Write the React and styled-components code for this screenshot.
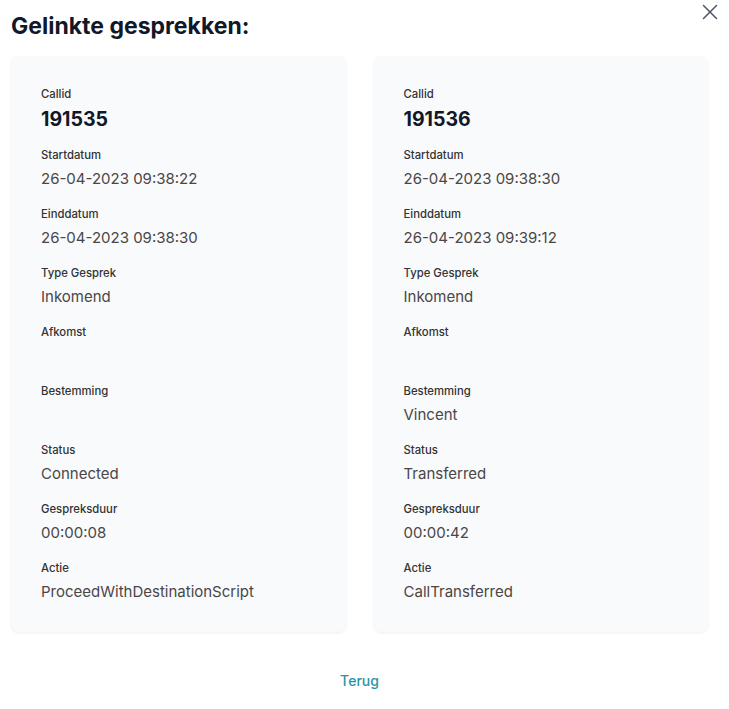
import React from 'react';
import styled, { createGlobalStyle } from 'styled-components';

const GlobalStyle = createGlobalStyle`
  body {
    margin: 0;
    background: #ffffff;
    font-family: Inter, "Noto Sans", "Liberation Sans", sans-serif;
  }
`;

const Dialog = styled.div`
  width: 729px;
  box-sizing: border-box;
  padding: 12px 21px 0 11px;
`;

const Header = styled.div`
  display: flex;
  justify-content: space-between;
  align-items: flex-start;
`;

const Title = styled.h2`
  margin: 0;
  font-size: 23px;
  line-height: 28px;
  font-weight: 700;
  color: #111827;
`;

const CloseButton = styled.button`
  display: flex;
  margin: -12px -14px 0 0;
  padding: 0;
  border: 0;
  background: none;
  color: #4b5563;
  cursor: pointer;
`;

const Cards = styled.div`
  display: grid;
  grid-template-columns: 1fr 1fr;
  gap: 28px;
  margin-top: 16px;
`;

const Card = styled.div`
  background: #f9fafb;
  border-radius: 8px;
  box-shadow: 0 1px 3px rgba(0, 0, 0, 0.07);
  padding: 30px 30px 28px;
  display: flex;
  flex-direction: column;
  gap: 15px;
`;

const Field = styled.div`
  display: flex;
  flex-direction: column;
  gap: 4px;
`;

const Label = styled.span`
  font-size: 11.3px;
  line-height: 16px;
  font-weight: 500;
  color: #333333;
`;

const Value = styled.span`
  font-size: ${(p) => (p.$big ? '19.5px' : '15px')};
  line-height: ${(p) => (p.$big ? '26px' : '24px')};
  font-weight: ${(p) => (p.$big ? 700 : 400)};
  color: ${(p) => (p.$big ? '#111827' : '#4a4646')};
  min-height: ${(p) => (p.$big ? '26px' : '24px')};
`;

const Footer = styled.div`
  display: flex;
  justify-content: center;
  margin-top: 39px;
`;

const BackLink = styled.button`
  border: 0;
  background: none;
  padding: 0;
  font-family: inherit;
  font-size: 14px;
  line-height: 20px;
  font-weight: 500;
  color: #2b93ab;
  cursor: pointer;
`;

const calls = [
  {
    callid: '191535',
    start: '26-04-2023 09:38:22',
    end: '26-04-2023 09:38:30',
    type: 'Inkomend',
    origin: '',
    destination: '',
    status: 'Connected',
    duration: '00:00:08',
    action: 'ProceedWithDestinationScript',
  },
  {
    callid: '191536',
    start: '26-04-2023 09:38:30',
    end: '26-04-2023 09:39:12',
    type: 'Inkomend',
    origin: '',
    destination: 'Vincent',
    status: 'Transferred',
    duration: '00:00:42',
    action: 'CallTransferred',
  },
];

const fields = [
  ['Startdatum', 'start'],
  ['Einddatum', 'end'],
  ['Type Gesprek', 'type'],
  ['Afkomst', 'origin'],
  ['Bestemming', 'destination'],
  ['Status', 'status'],
  ['Gespreksduur', 'duration'],
  ['Actie', 'action'],
];

function CallCard({ call }) {
  return (
    <Card>
      <Field>
        <Label>Callid</Label>
        <Value $big>{call.callid}</Value>
      </Field>
      {fields.map(([label, key]) => (
        <Field key={key}>
          <Label>{label}</Label>
          <Value>{call[key]}</Value>
        </Field>
      ))}
    </Card>
  );
}

export default function App() {
  return (
    <>
      <GlobalStyle />
      <Dialog>
        <Header>
          <Title>Gelinkte gesprekken:</Title>
          <CloseButton aria-label="Sluiten">
            <svg width="24" height="24" viewBox="0 0 24 24" fill="none" stroke="currentColor" strokeWidth="1.5" strokeLinecap="round">
              <path d="M5.5 5.5l13 13M18.5 5.5l-13 13" />
            </svg>
          </CloseButton>
        </Header>
        <Cards>
          {calls.map((call) => (
            <CallCard key={call.callid} call={call} />
          ))}
        </Cards>
        <Footer>
          <BackLink>Terug</BackLink>
        </Footer>
      </Dialog>
    </>
  );
}
